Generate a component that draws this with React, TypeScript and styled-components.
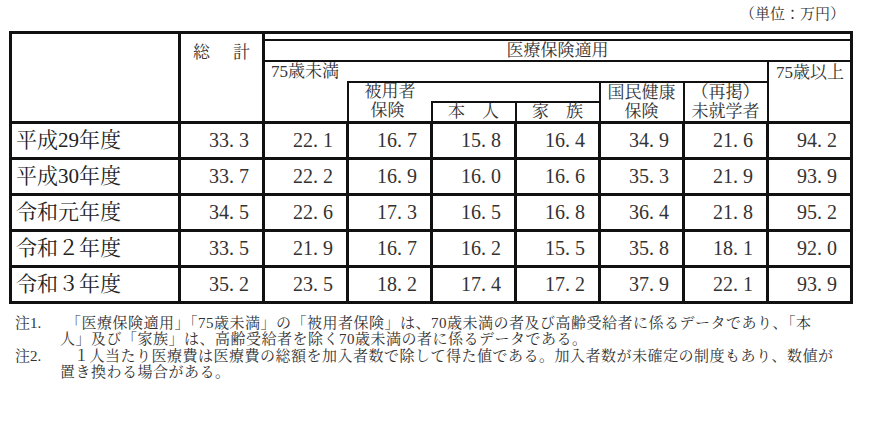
import React from 'react'
import styled, { createGlobalStyle } from 'styled-components'

const serif = `"Liberation Serif", "Noto Serif CJK JP", "Noto Sans CJK JP", serif`

const GlobalStyle = createGlobalStyle`
  html, body {
    margin: 0;
    padding: 0;
    background: #fff;
  }
  body {
    font-family: ${serif};
    color: #222;
  }
`

const rows = [
    { label: '平成29年度', values: ['33.3', '22.1', '16.7', '15.8', '16.4', '34.9', '21.6', '94.2'] },
    { label: '平成30年度', values: ['33.7', '22.2', '16.9', '16.0', '16.6', '35.3', '21.9', '93.9'] },
    { label: '令和元年度', values: ['34.5', '22.6', '17.3', '16.5', '16.8', '36.4', '21.8', '95.2'] },
    { label: '令和２年度', values: ['33.5', '21.9', '16.7', '16.2', '15.5', '35.8', '18.1', '92.0'] },
    { label: '令和３年度', values: ['35.2', '23.5', '18.2', '17.4', '17.2', '37.9', '22.1', '93.9'] },
]

const Num = ({ v }: { v: string }) => {
    const [a, b] = v.split('.')
    return (
        <>
            {a}
            <Dot>.</Dot>
            {b}
        </>
    )
}

const App = () => {
    return (
        <Page>
            <GlobalStyle />
            <Unit>（単位：万円）</Unit>

            <Table>
                <colgroup>
                    <col style={{ width: 169 }} />
                    {Array.from({ length: 8 }).map((_, i) => (
                        <col key={i} style={{ width: 84 }} />
                    ))}
                </colgroup>
                <thead>
                    <HeadRow $h={7}>
                        <HeadCell rowSpan={5} />
                        <HeadCell rowSpan={5} $valign="top" $pad="9px 0 0 0">
                            <Spaced>総　計</Spaced>
                        </HeadCell>
                        <HeadCell colSpan={8} $thin />
                    </HeadRow>
                    <HeadRow $h={20}>
                        <HeadCell colSpan={8} $thin>医療保険適用</HeadCell>
                    </HeadRow>
                    <HeadRow $h={21}>
                        <HeadCell colSpan={6} $thin $align="left" $pad="0 0 0 6px">
                            75歳未満
                        </HeadCell>
                        <HeadCell rowSpan={3} $thin $valign="top" $pad="1px 0 0 1px">
                            75歳以上
                        </HeadCell>
                    </HeadRow>
                    <HeadRow $h={20}>
                        <HeadCell rowSpan={2} $thin $hideTop />
                        <HeadCell colSpan={3} $thin $align="left" $pad="0 0 0 16px" $lh={18}>
                            被用者
                        </HeadCell>
                        <HeadCell rowSpan={2} $thin $lh={19}>
                            国民健康
                            <br />
                            保険
                        </HeadCell>
                        <HeadCell rowSpan={2} $thin $lh={19}>
                            （再掲）
                            <br />
                            未就学者
                        </HeadCell>
                    </HeadRow>
                    <HeadRow $h={19}>
                        <HeadCell $thin $hideTop $pad="0 4px 0 0" $lh={18}>
                            保険
                        </HeadCell>
                        <HeadCell $thin $lh={18}>本　人</HeadCell>
                        <HeadCell $thin $lh={18}>家　族</HeadCell>
                    </HeadRow>
                </thead>
                <tbody>
                    {rows.map(r => (
                        <DataRow key={r.label}>
                            <LabelCell>{r.label}</LabelCell>
                            {r.values.map((v, i) => (
                                <NumCell key={i}>
                                    <Num v={v} />
                                </NumCell>
                            ))}
                        </DataRow>
                    ))}
                </tbody>
            </Table>

            <Notes>
                <Note>
                    <NoteLabel>注1.</NoteLabel>
                    <NoteBody $indent={6}>
                        「医療保険適用」「75歳未満」の「被用者保険」は、70歳未満の者及び高齢受給者に係るデータであり、「本
                        <br />
                        人」及び「家族」は、高齢受給者を除く70歳未満の者に係るデータである。
                    </NoteBody>
                </Note>
                <Note>
                    <NoteLabel>注2.</NoteLabel>
                    <NoteBody $indent={14}>
                        １人当たり医療費は医療費の総額を加入者数で除して得た値である。加入者数が未確定の制度もあり、数値が
                        <br />
                        置き換わる場合がある。
                    </NoteBody>
                </Note>
            </Notes>
        </Page>
    )
}
export default App

const Page = styled.div`
  width: 870px;
  height: 431px;
  box-sizing: border-box;
  padding: 5px 0 0 9px;
  overflow: hidden;
`

const Unit = styled.div`
  width: 841px;
  text-align: right;
  font-size: 15px;
  line-height: 19px;
  padding-right: 5px;
  box-sizing: border-box;
  margin-bottom: 7px;
  color: #333;
`

const Table = styled.table`
  border-collapse: collapse;
  table-layout: fixed;
  width: 841px;
  border: 3px solid #111;
`

const HeadRow = styled.tr<{ $h: number }>`
  height: ${p => p.$h}px;
`

const HeadCell = styled.td<{
    $align?: 'left' | 'center' | 'right'
    $valign?: 'top' | 'middle'
    $pad?: string
    $thin?: boolean
    $hideTop?: boolean
    $lh?: number
}>`
  border: ${p => (p.$thin ? '2px' : '3px')} solid #111;
  ${p => (p.$hideTop ? 'border-top: hidden;' : '')}
  padding: ${p => p.$pad || '0'};
  text-align: ${p => p.$align || 'center'};
  vertical-align: ${p => p.$valign || 'middle'};
  font-size: 17px;
  line-height: ${p => p.$lh || 19}px;
  white-space: nowrap;
  color: #333;
`

const Spaced = styled.span`
  letter-spacing: 3px;
  margin-right: -3px;
`

const DataRow = styled.tr`
  height: 36px;
`

const LabelCell = styled.td`
  border: 3px solid #111;
  padding: 0 0 0 4px;
  font-size: 21px;
  line-height: 24px;
  text-align: left;
  vertical-align: middle;
  white-space: nowrap;
  color: #222;
`

const NumCell = styled.td`
  border: 3px solid #111;
  padding: 0 13px 0 0;
  font-size: 20px;
  line-height: 24px;
  text-align: right;
  vertical-align: middle;
  white-space: nowrap;
  color: #333;
`

const Dot = styled.span`
  display: inline-block;
  width: 0.5em;
  text-align: left;
`

const Notes = styled.div`
  margin-top: 11px;
  padding-left: 6px;
  display: flex;
  flex-direction: column;
  gap: 1px;
`

const Note = styled.div`
  display: flex;
  font-size: 15px;
  line-height: 16px;
  color: #333;
`

const NoteLabel = styled.div`
  width: 45px;
  flex-shrink: 0;
`

const NoteBody = styled.div<{ $indent: number }>`
  text-indent: ${p => p.$indent}px;
  white-space: nowrap;
  letter-spacing: 0.5px;
`
